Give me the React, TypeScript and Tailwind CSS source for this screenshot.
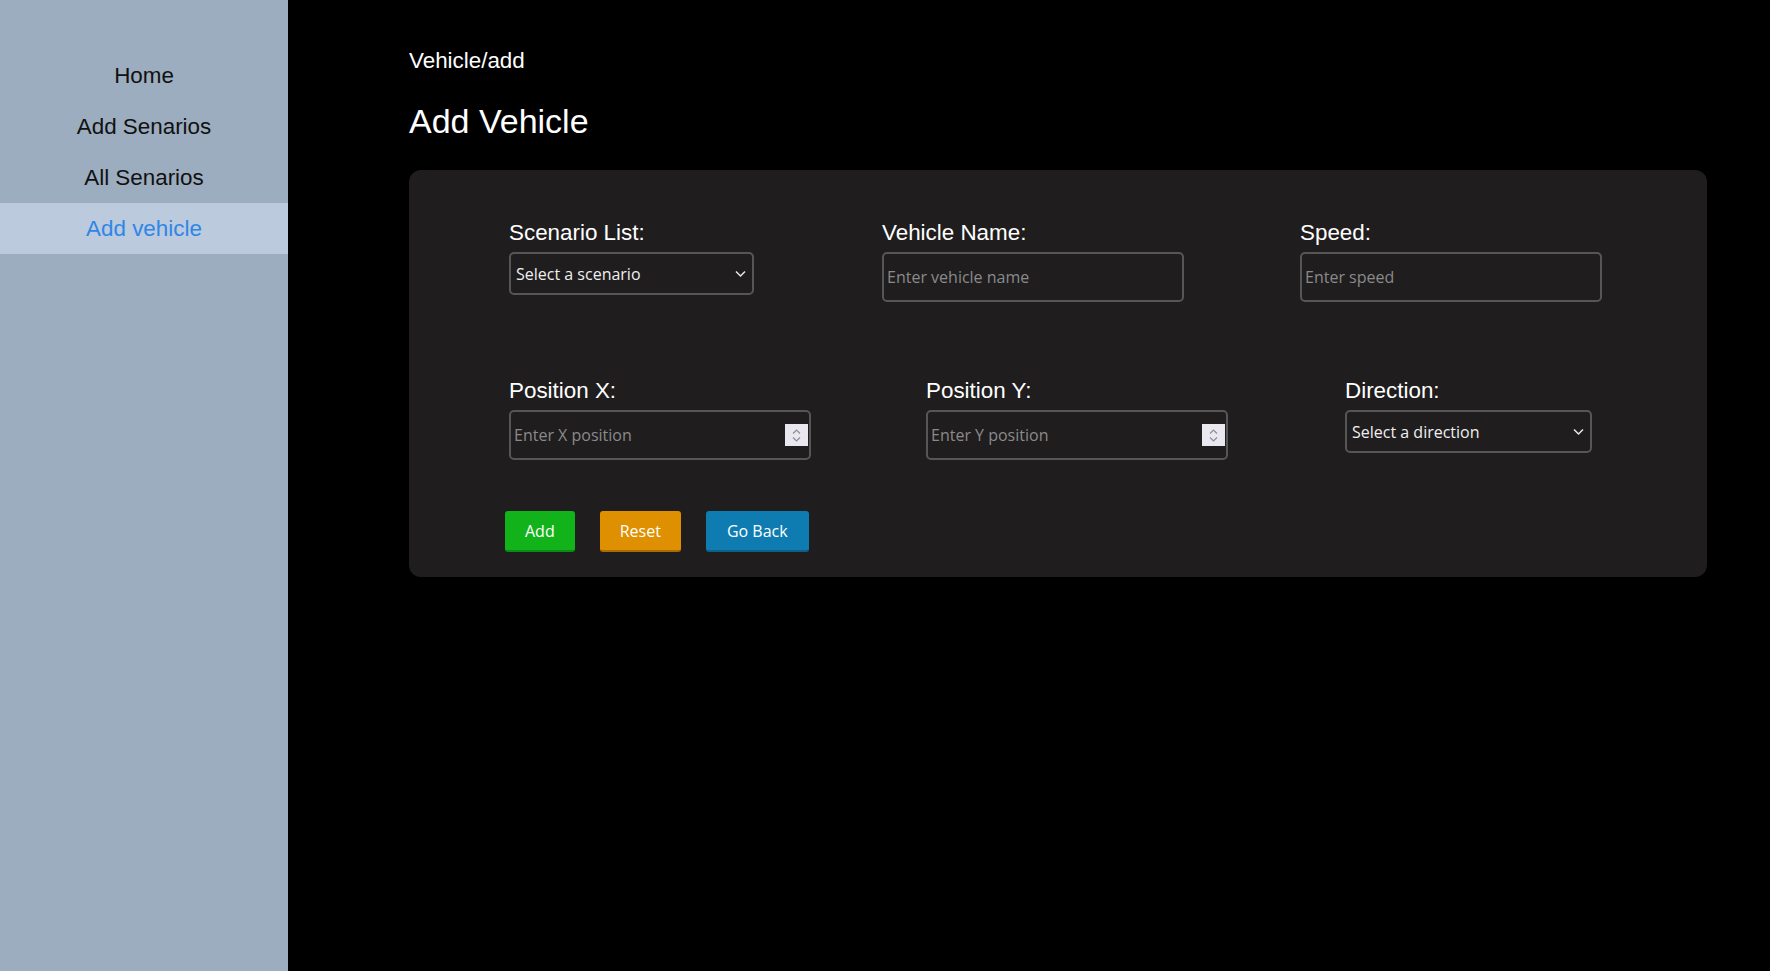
import React from "react"

const navItems = ["Home", "Add Senarios", "All Senarios", "Add vehicle"]

function Chevron() {
  return (
    <svg width="11" height="7" viewBox="0 0 11 7" className="pointer-events-none absolute right-[8px] top-1/2 -translate-y-1/2">
      <path d="M1 1l4.5 4.5L10 1" fill="none" stroke="#e8e8e8" strokeWidth="1.5" />
    </svg>
  )
}

function Spinner() {
  return (
    <div className="pointer-events-none absolute right-[3px] top-1/2 flex h-[22px] w-[23px] -translate-y-1/2 flex-col items-center justify-center gap-[3px] bg-[#e9e7ef]">
      <svg width="9" height="5" viewBox="0 0 9 5">
        <path d="M1 4.5l3.5-3.5 3.5 3.5" fill="none" stroke="#8e8d96" strokeWidth="1.2" />
      </svg>
      <svg width="9" height="5" viewBox="0 0 9 5">
        <path d="M1 0.5l3.5 3.5 3.5-3.5" fill="none" stroke="#8e8d96" strokeWidth="1.2" />
      </svg>
    </div>
  )
}

function Label({ children }: { children: React.ReactNode }) {
  return <label className="mb-[7px] block text-[22.4px] leading-[25px] text-white">{children}</label>
}

function SelectField({ label, placeholder, width }: { label: string; placeholder: string; width: string }) {
  return (
    <div className={width}>
      <Label>{label}</Label>
      <div className="relative">
        <select
          defaultValue=""
          className="h-[43px] w-full appearance-none rounded-[5px] border-2 border-[#575657] bg-[#1f1d1e] pl-[5px] font-['Open_Sans',sans-serif] text-[16px] text-[#efefef] outline-none"
        >
          <option value="">{placeholder}</option>
        </select>
        <Chevron />
      </div>
    </div>
  )
}

function TextField({ label, placeholder, spinner }: { label: string; placeholder: string; spinner?: boolean }) {
  return (
    <div className="w-[302px]">
      <Label>{label}</Label>
      <div className="relative">
        <input
          type="text"
          placeholder={placeholder}
          className="h-[50px] w-full rounded-[5px] border-2 border-[#575657] bg-[#1f1d1e] px-[3px] font-['Open_Sans',sans-serif] text-[16px] text-white outline-none placeholder:text-[#8a8a8a]"
        />
        {spinner && <Spinner />}
      </div>
    </div>
  )
}

export default function App() {
  return (
    <div className="flex h-screen w-full bg-black font-['Liberation_Sans',Arial,sans-serif]">
      <aside className="w-[288px] shrink-0 bg-[#9cadbf] pt-[50px]">
        {navItems.map((item) => (
          <div
            key={item}
            className={`flex h-[51px] items-center justify-center text-[22.4px] ${
              item === "Add vehicle" ? "bg-[#bbcadd] text-[#2f86e6]" : "text-[#111111]"
            }`}
          >
            {item}
          </div>
        ))}
      </aside>

      <main className="flex-1 pl-[121px] pr-[63px] pt-[48px]">
        <div className="text-[22.4px] leading-[25px] text-white">Vehicle/add</div>
        <h1 className="mt-[29px] text-[34px] leading-[39px] text-white">Add Vehicle</h1>

        <form className="mt-[29px] rounded-[12px] bg-[#1f1d1e] pb-[25px] pl-[100px] pt-[50px]">
          <div className="flex items-start">
            <SelectField label="Scenario List:" placeholder="Select a scenario" width="w-[245px]" />
            <div className="ml-[128px]">
              <TextField label="Vehicle Name:" placeholder="Enter vehicle name" />
            </div>
            <div className="ml-[116px]">
              <TextField label="Speed:" placeholder="Enter speed" />
            </div>
          </div>

          <div className="mt-[76px] flex items-start">
            <TextField label="Position X:" placeholder="Enter X position" spinner />
            <div className="ml-[115px]">
              <TextField label="Position Y:" placeholder="Enter Y position" spinner />
            </div>
            <div className="ml-[117px]">
              <SelectField label="Direction:" placeholder="Select a direction" width="w-[247px]" />
            </div>
          </div>

          <div className="-ml-[4px] mt-[51px] flex gap-[25px] font-['Open_Sans',sans-serif] text-[16px] text-white">
            <button type="button" className="h-[41px] rounded-[3px] border-b-2 border-[#0b8c12] bg-[#12b31a] px-[20px]">
              Add
            </button>
            <button type="button" className="h-[41px] rounded-[3px] border-b-2 border-[#a96c00] bg-[#df9000] px-[20px]">
              Reset
            </button>
            <button type="button" className="h-[41px] rounded-[3px] border-b-2 border-[#0b5f88] bg-[#0e7cb0] px-[21px]">
              Go Back
            </button>
          </div>
        </form>
      </main>
    </div>
  )
}
